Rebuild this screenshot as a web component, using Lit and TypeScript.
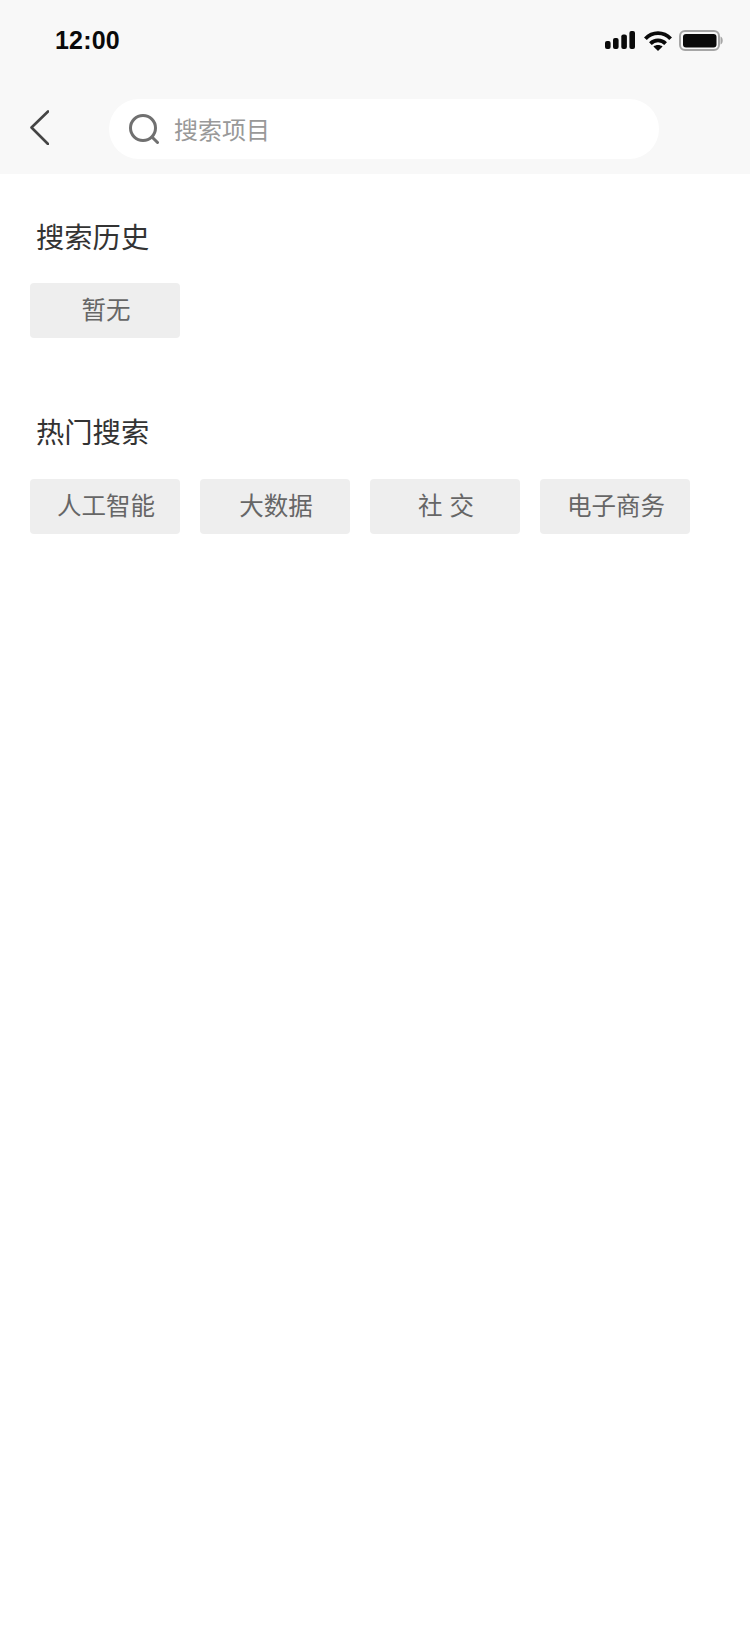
import { LitElement, html, css } from "lit";
import { customElement } from "lit/decorators.js";

const HISTORY = ["暂无"];
const HOT = ["人工智能", "大数据", "社 交", "电子商务"];

@customElement("app-root")
export class AppRoot extends LitElement {
  static styles = css`
    :host {
      display: block;
      width: 750px;
      height: 1625px;
      overflow: hidden;
      background: #fff;
      font-family: "Liberation Sans", "Noto Sans CJK SC", sans-serif;
    }
    .header {
      background: #f8f8f8;
      height: 174px;
      display: flex;
      flex-direction: column;
    }
    .status {
      height: 81px;
      padding: 0 27px 0 55px;
      display: flex;
      align-items: center;
      justify-content: space-between;
    }
    .time {
      font-size: 25px;
      font-weight: 700;
      letter-spacing: 0.2px;
      color: #0a0a0a;
      line-height: 1;
    }
    .status-icons {
      display: flex;
      align-items: center;
      gap: 7px;
    }
    .status-icons svg { display: block; }
    .signal { margin-right: 2px; }
    .nav {
      display: flex;
      align-items: flex-start;
      padding: 18px 0 0 30px;
    }
    .back {
      display: block;
      margin: 11px 60px 0 0;
    }
    .search {
      width: 550px;
      height: 60px;
      border-radius: 30px;
      background: #fff;
      display: flex;
      align-items: center;
      padding-left: 20px;
      box-sizing: border-box;
      gap: 15px;
    }
    .search svg { display: block; }
    .placeholder {
      font-size: 24px;
      color: #999;
      line-height: 1;
      padding-top: 4px;
    }
    .section {
      padding: 0 30px;
    }
    .section.first { padding-top: 47px; }
    .section.second { padding-top: 78px; }
    .title {
      font-size: 28.3px;
      line-height: 34px;
      color: #333;
      padding-left: 6px;
      margin-bottom: 28px;
    }
    .second .title { margin-bottom: 29px; }
    .chips {
      display: flex;
      gap: 20px;
    }
    .chip {
      width: 150px;
      height: 55px;
      box-sizing: border-box;
      padding: 0 0 4px 2px;
      border-radius: 4px;
      background: #eee;
      color: #666;
      font-size: 24.5px;
      display: flex;
      align-items: center;
      justify-content: center;
    }
  `;

  render() {
    return html`
      <div class="header">
        <div class="status">
          <span class="time">12:00</span>
          <div class="status-icons">
            <svg class="signal" width="31" height="19" viewBox="0 0 31 19" fill="#0a0a0a">
              <rect x="1" y="10" width="5.6" height="8" rx="2"></rect>
              <rect x="9" y="7" width="5.6" height="11" rx="2"></rect>
              <rect x="17.3" y="3.5" width="5.6" height="14.5" rx="2"></rect>
              <rect x="25.4" y="0" width="5.6" height="18" rx="2"></rect>
            </svg>
            <svg width="28" height="20" viewBox="0 0 28 20" fill="none" stroke="#0a0a0a" stroke-width="3.8">
              <path d="M1.4 7.8C8.4 .2 19.6 .2 26.6 7.8"></path>
              <path d="M6.4 12.6C10.6 8.4 17.4 8.4 21.6 12.6"></path>
              <path d="M14 20 9.4 15.6C12 13.6 16 13.6 18.6 15.6Z" fill="#0a0a0a" stroke="none"></path>
            </svg>
            <svg width="44" height="21" viewBox="0 0 44 21">
              <rect x="1" y="1" width="39" height="19" rx="5" fill="none" stroke="#a6a6a6" stroke-width="2"></rect>
              <rect x="4" y="4" width="33.5" height="13.5" rx="3" fill="#0a0a0a"></rect>
              <path d="M41.5 6.5c1.4.4 2.2 2 2.2 4s-.8 3.6-2.2 4z" fill="#a6a6a6"></path>
            </svg>
          </div>
        </div>
        <div class="nav">
          <svg class="back" width="19" height="35" viewBox="0 0 19 35" fill="none" stroke="#444" stroke-width="2.6" stroke-linecap="round" stroke-linejoin="round">
            <path d="M18 1.5 1.5 17.5 18 34"></path>
          </svg>
          <div class="search">
            <svg width="30" height="30" viewBox="0 0 30 30" fill="none" stroke="#707070" stroke-width="3" stroke-linecap="round">
              <circle cx="14" cy="14" r="12.5"></circle>
              <path d="M24 24 28.5 28.5"></path>
            </svg>
            <span class="placeholder">搜索项目</span>
          </div>
        </div>
      </div>
      <div class="section first">
        <div class="title">搜索历史</div>
        <div class="chips">${HISTORY.map((c) => html`<div class="chip">${c}</div>`)}</div>
      </div>
      <div class="section second">
        <div class="title">热门搜索</div>
        <div class="chips">${HOT.map((c) => html`<div class="chip">${c}</div>`)}</div>
      </div>
    `;
  }
}
